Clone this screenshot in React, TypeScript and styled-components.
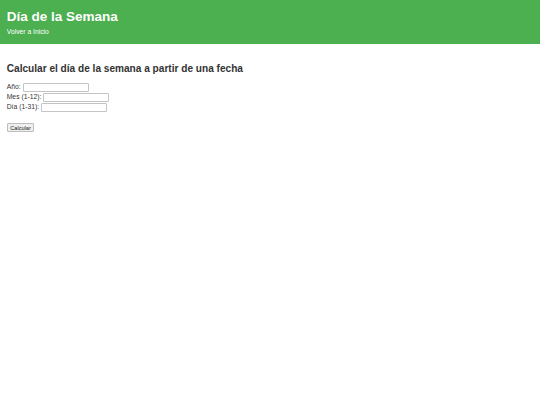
import React from 'react';
import styled, { createGlobalStyle } from 'styled-components';

const GlobalStyle = createGlobalStyle`
  html, body {
    margin: 0;
    padding: 0;
    background: #ffffff;
  }

  body {
    font-family: "Liberation Sans", Arial, sans-serif;
    color: #333333;
  }
`;

const Header = styled.header`
  background: #4caf50;
  color: #ffffff;
  padding: 9.4px 6.75px 7.9px;
`;

const Title = styled.h1`
  margin: 0;
  font-size: 13.5px;
  line-height: 15.5px;
  font-weight: 700;
`;

const Nav = styled.nav`
  margin-top: 3.6px;
  font-size: 6.75px;
  line-height: 7.75px;
`;

const NavLink = styled.a`
  color: #ffffff;
  text-decoration: none;
`;

const Main = styled.main`
  padding: 0 6.75px;
`;

const Heading = styled.h2`
  margin: 18.7px 0 8.4px;
  font-size: 10.1px;
  line-height: 11.6px;
  font-weight: 700;
  color: #333333;
`;

const Form = styled.form`
  display: flex;
  flex-direction: column;
  align-items: flex-start;
`;

const Row = styled.div`
  display: flex;
  align-items: baseline;
  gap: 1.9px;
  height: 10px;
`;

const Label = styled.label`
  font-size: 6.75px;
  line-height: 7.75px;
  color: #333333;
`;

const Input = styled.input`
  box-sizing: border-box;
  width: 66px;
  height: 9px;
  margin: 0;
  padding: 0 1px;
  font-family: "Liberation Sans", Arial, sans-serif;
  font-size: 5.6px;
  border: 1px solid #c4c4c4;
  border-radius: 1px;
  background: #ffffff;
  outline: none;
`;

const Button = styled.button`
  box-sizing: border-box;
  margin-top: 10.3px;
  height: 9.3px;
  padding: 0 2.5px;
  font-family: "Liberation Sans", Arial, sans-serif;
  font-size: 5.6px;
  line-height: 6.4px;
  color: #222222;
  background: #efefef;
  border: 1px solid #bdbdbd;
  border-radius: 1px;
  outline: none;
`;

const fields = [
  { id: 'anio', label: 'Año:' },
  { id: 'mes', label: 'Mes (1-12):' },
  { id: 'dia', label: 'Día (1-31):' },
];

export default function App() {
  return (
    <>
      <GlobalStyle />
      <Header>
        <Title>Día de la Semana</Title>
        <Nav>
          <NavLink href="#">Volver a Inicio</NavLink>
        </Nav>
      </Header>
      <Main>
        <Heading>Calcular el día de la semana a partir de una fecha</Heading>
        <Form onSubmit={e => e.preventDefault()}>
          {fields.map(f => (
            <Row key={f.id}>
              <Label htmlFor={f.id}>{f.label}</Label>
              <Input id={f.id} type="text" />
            </Row>
          ))}
          <Button type="submit">Calcular</Button>
        </Form>
      </Main>
    </>
  );
}
